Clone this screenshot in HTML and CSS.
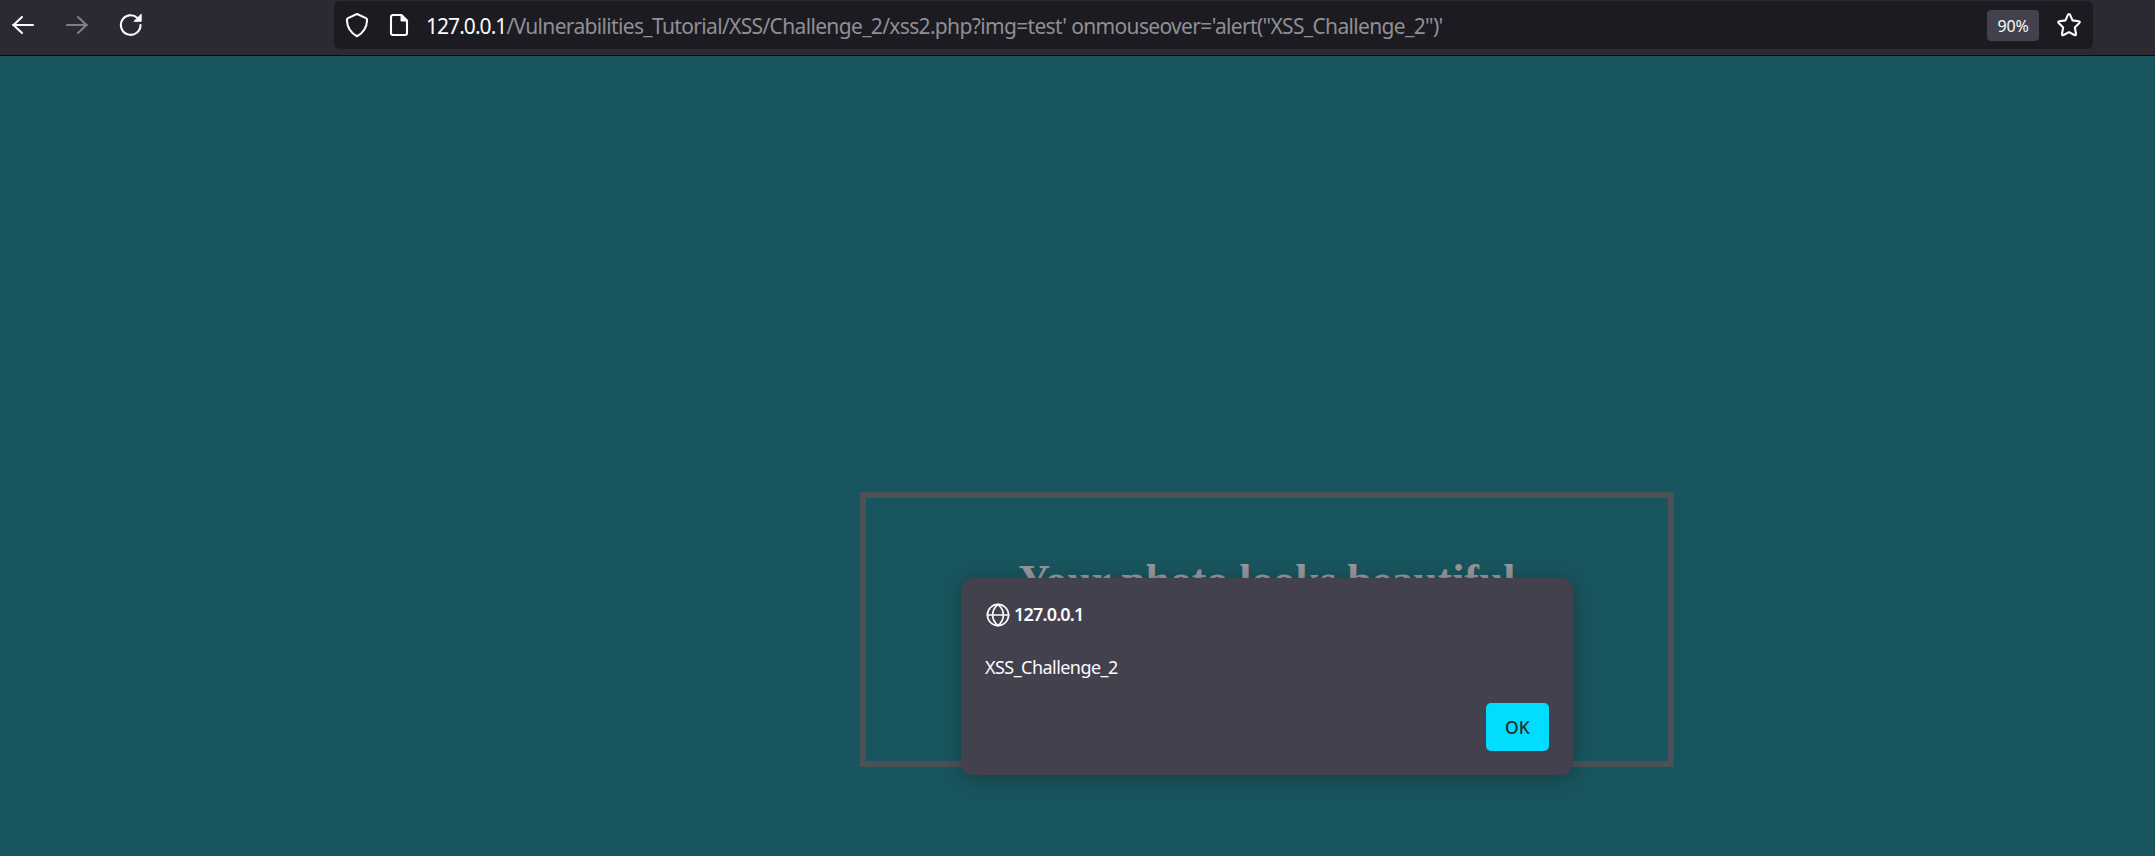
FILE: index.html
```html
<!DOCTYPE html>
<html lang="en">
<head>
<meta charset="utf-8">
<title>XSS Challenge 2</title>
<link rel="stylesheet" href="styles.css">
</head>
<body>
<header class="toolbar">
  <nav class="nav">
    <svg class="icon" width="24" height="24" viewBox="0 0 24 24"><path d="M22 12H2M11 4L2.500 12L11 20"/></svg>
    <svg class="icon icon-disabled" width="24" height="24" viewBox="0 0 24 24"><path d="M2 12H22M13 4L21.500 12L13 20"/></svg>
    <svg class="icon" width="24" height="24" viewBox="0 0 24 24"><path d="M21.500 12A9.800 9.800 0 1 1 18.400 4.900"/><path class="solid" d="M22.200 1.500V8.300H15.400Z"/></svg>
  </nav>
  <div class="urlbar">
    <svg class="icon" width="24" height="26" viewBox="0 0 24 26"><path d="M12 2L21 6.100Q22.200 6.700 22.100 8.200C21.700 16 19 20.500 12 24.200C5 20.500 2.300 16 1.900 8.200Q1.800 6.700 3 6.100Z"/></svg>
    <svg class="icon page-icon" width="20" height="24" viewBox="0 0 20 24"><path d="M12.500 2H4Q2 2 2 4V20Q2 22 4 22H16Q18 22 18 20V7.500Z"/><path class="solid" d="M12 2V8H18Z"/></svg>
    <div class="url"><span class="host">127.0.0.1</span><span class="path">/Vulnerabilities_Tutorial/XSS/Challenge_2/xss2.php?img=test' onmouseover='alert("XSS_Challenge_2")'</span></div>
    <span class="zoom">90%</span>
    <svg class="icon" width="26" height="26" viewBox="0 0 26 26"><path d="M12 2.700Q13 1.200 14 2.700L16.500 8.400L22.700 9.200Q24.600 9.600 23.300 11L18.800 15.400L20 21.800Q20.200 23.700 18.400 23L13 20.100L7.600 23Q5.800 23.700 6 21.800L7.200 15.400L2.700 11Q1.400 9.600 3.300 9.200L9.500 8.400Z"/></svg>
  </div>
</header>
<main class="page">
  <section class="card"><h1 class="title">Your photo looks beautiful</h1></section>
  <div class="dialog" role="dialog">
    <div class="origin">
      <svg class="icon globe" width="24" height="24" viewBox="0 0 24 24"><circle cx="12" cy="12" r="10.600"/><path d="M1.400 12H22.600M12 1.400C4.800 7.500 4.800 16.500 12 22.600M12 1.400C19.200 7.500 19.200 16.500 12 22.600"/></svg>
      <span class="origin-name">127.0.0.1</span>
    </div>
    <p class="message"><span>XSS_Challenge_2</span></p>
    <button class="ok">OK</button>
  </div>
</main>
</body>
</html>
```
FILE: styles.css
```css
* { box-sizing: border-box; }
body {
  margin: 0;
  height: 856px;
  overflow: hidden;
  background: #19555e;
  color: #fbfbfe;
  font-family: "Noto Sans", "Open Sans", sans-serif;
}
.toolbar {
  display: flex;
  height: 56px;
  padding: 1px 62px 0 11px;
  background: #2b2a33;
  border-bottom: 1px solid #0c0c0d;
}
.nav {
  display: flex;
  gap: 30px;
  width: 323px;
  padding-top: 12px;
}
.icon {
  display: block;
  flex: none;
  fill: none;
  stroke: #fbfbfe;
  stroke-width: 2.100;
  stroke-linecap: round;
  stroke-linejoin: round;
}
.icon .solid { fill: #fbfbfe; stroke-width: 1; }
.icon-disabled { opacity: .4; }
.urlbar {
  display: flex;
  align-items: center;
  flex: 1;
  height: 48px;
  padding: 0 11px;
  background: #1c1b22;
  border-radius: 6px;
}
.page-icon { margin-left: 20px; }
.url {
  flex: 1;
  margin-left: 17px;
  padding-top: 2px;
  font-size: 21px;
  line-height: 46px;
  white-space: nowrap;
}
.host { letter-spacing: -.95px; }
.path { color: #8f8f94; letter-spacing: -.66px; }
.zoom {
  width: 52px;
  height: 31px;
  margin-right: 17px;
  border-radius: 4px;
  background: #42414d;
  font-size: 16px;
  line-height: 32px;
  letter-spacing: -.2px;
  text-align: center;
}
.page { padding: 436px 0 0 860px; }
.card {
  width: 814px;
  height: 275px;
  border: 6px solid #4b5257;
  padding-top: 57px;
}
.title {
  margin: 0;
  color: #97969b;
  font: bold 43.800px/50px "Liberation Serif", serif;
  text-align: center;
  white-space: nowrap;
}
.dialog {
  position: absolute;
  left: 961px;
  top: 578px;
  display: flex;
  flex-direction: column;
  width: 612px;
  height: 197px;
  padding: 25px 24px 24px;
  border-radius: 12px;
  background: #42414d;
  box-shadow: 0 3px 21px rgba(12, 12, 13, .3);
}
.origin { display: flex; align-items: center; height: 24px; gap: 4px; padding-left: 1px; }
.globe { stroke-width: 1.700; }
.origin-name { font-size: 18px; line-height: 24px; font-weight: 600; letter-spacing: -.8px; padding-bottom: 2px; }
.message { margin: 28px 0 0; font-size: 18px; line-height: 25px; letter-spacing: -.55px; }
.ok {
  align-self: flex-end;
  width: 63px;
  height: 48px;
  margin-top: auto;
  padding: 0;
  border: 0;
  border-radius: 5px;
  background: #00ddff;
  color: #2b2a33;
  font: 500 17.500px/49px "Noto Sans", "Open Sans", sans-serif;
}
```
